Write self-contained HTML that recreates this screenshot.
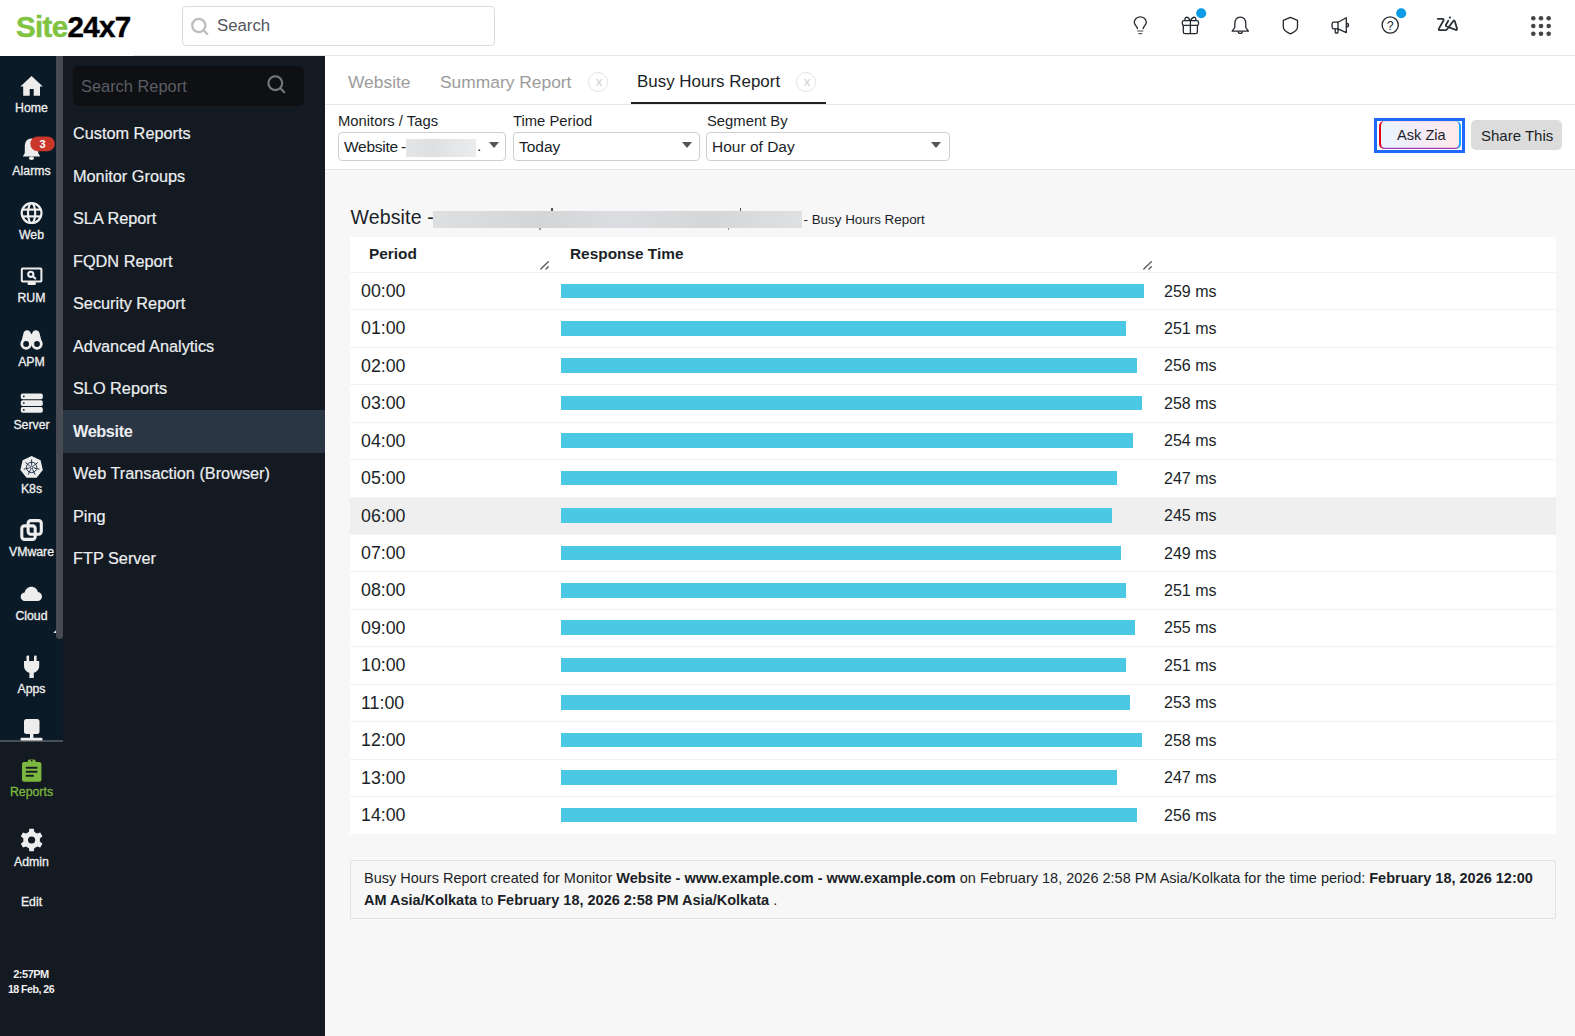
<!DOCTYPE html>
<html><head><meta charset="utf-8">
<style>
*{box-sizing:border-box;margin:0;padding:0}
html,body{width:1575px;height:1036px;overflow:hidden;background:#fff;font-family:"Liberation Sans",sans-serif;color:#1b1f27}
.abs{position:absolute}
#hdr{position:absolute;left:0;top:0;width:1575px;height:56px;background:#fff}
#hdrline{position:absolute;left:133px;top:55px;width:1442px;height:1px;background:#e6e6e6}
#logo{position:absolute;left:16px;top:10px;font-size:29.5px;font-weight:700;letter-spacing:-0.65px;-webkit-text-stroke:0.45px currentColor;white-space:nowrap}
#logo .g{color:#80c342}
#logo .k{color:#000}
#search{position:absolute;left:182px;top:6px;width:313px;height:40px;border:1px solid #dcdcdc;border-radius:4px;background:#fff}
#search span{position:absolute;left:34px;top:9px;font-size:16.8px;color:#52565c}
#rail{position:absolute;left:0;top:56px;width:63px;height:685px;background:#0a1a26}
#raildiv{position:absolute;left:0;top:740px;width:63px;height:2px;background:#4a4f57}
#thumb{position:absolute;left:56px;top:56px;width:7px;height:582.7px;background:#474a52;border-radius:0 0 3.5px 3.5px}
#panel{position:absolute;left:63px;top:56px;width:262px;height:980px;background:#131a22}
#pbot{position:absolute;left:0;top:742px;width:63px;height:294px;background:#131a22}
#srep{position:absolute;left:73px;top:66px;width:231px;height:40px;background:#0f1014;border-radius:5px}
#srep span{position:absolute;left:8px;top:11px;font-size:16.4px;color:#5b5e64}
.mi{position:absolute;left:63px;width:262px;height:43px;color:#eceef0;font-size:16.3px;padding-left:10px;line-height:43px;white-space:nowrap;-webkit-text-stroke:0.2px currentColor}
.mi.sel{background:#2b3645;font-weight:700;letter-spacing:-0.4px;-webkit-text-stroke:0}
.ri{position:absolute;left:0;width:63px;text-align:center;color:#f0f0f0;font-size:12.3px;font-weight:400;-webkit-text-stroke:0.3px currentColor;white-space:nowrap}
#main{position:absolute;left:325px;top:56px;width:1250px;height:980px;background:#f7f7f7}
#tabs{position:absolute;left:325px;top:56px;width:1250px;height:49px;background:#fff;border-bottom:1px solid #e6e6e6}
.tab{position:absolute;top:71.7px;font-size:17.4px;color:#9b9b9b;white-space:nowrap}
.cls{position:absolute;top:72px;width:20px;height:20px;border:1px solid #e3e3e3;border-radius:50%;color:#d2d2d2;font-size:13.5px;text-align:center;line-height:18px;padding-left:2px}
#filt{position:absolute;left:325px;top:105px;width:1250px;height:65px;background:#fff;border-bottom:1px solid #e6e6e6}
.lbl{position:absolute;top:112.7px;font-size:14.8px;color:#1b1f27;white-space:nowrap}
.sel{}
.selbox{position:absolute;top:131.5px;height:29.5px;border:1px solid #cfcfcf;border-radius:4px;background:#fff}
.selbox span{position:absolute;left:5px;top:5.5px;font-size:15.5px;white-space:nowrap;color:#1b1f27}
.tri{position:absolute;top:9.2px;width:0;height:0;border-left:5px solid transparent;border-right:5px solid transparent;border-top:6px solid #555}
#rtitle{position:absolute;left:350.5px;top:206px;font-size:19.5px;letter-spacing:0.15px;white-space:nowrap;color:#1b1f27}
#table{position:absolute;left:350px;top:237px;width:1206px;height:597px;background:#fff}
.th{position:absolute;top:244.8px;font-size:15.4px;font-weight:700;color:#1b1f27;white-space:nowrap}
.row{position:absolute;left:350px;width:1206px;height:37.43px;border-top:1px solid #f2f2f2}
.row .p{position:absolute;left:11px;top:8px;font-size:17.8px;color:#1b1f27}
.row .b{position:absolute;left:211px;top:10.6px;height:14.5px;background:#4bc9e4}
.row .v{position:absolute;left:814px;top:9.5px;font-size:16px;color:#1b1f27;white-space:nowrap}
#foot{position:absolute;left:350px;top:860px;width:1206px;height:59px;border:1px solid #e2e2e2;border-radius:2px;background:#f7f7f7}
</style></head><body>
<div id="hdr"></div>
<div id="hdrline"></div>
<div id="logo"><span class="g">Site</span><span class="k">24x7</span></div>
<div id="search"><span>Search</span></div>

<div id="rail"></div>
<div id="raildiv"></div>
<div id="thumb"></div>
<div id="panel"></div><div id="pbot"></div>
<div id="srep"><span>Search Report</span></div>

<div class="mi" style="top:112px">Custom Reports</div>
<div class="mi" style="top:154.5px">Monitor Groups</div>
<div class="mi" style="top:197px">SLA Report</div>
<div class="mi" style="top:239.5px">FQDN Report</div>
<div class="mi" style="top:282px">Security Report</div>
<div class="mi" style="top:324.5px">Advanced Analytics</div>
<div class="mi" style="top:367px">SLO Reports</div>
<div class="mi sel" style="top:410px">Website</div>
<div class="mi" style="top:452px">Web Transaction (Browser)</div>
<div class="mi" style="top:494.5px">Ping</div>
<div class="mi" style="top:537px">FTP Server</div>

<div id="main"></div>
<div id="tabs"></div>
<div class="tab" style="left:348px">Website</div>
<div class="tab" style="left:440px">Summary Report</div>
<div class="cls" style="left:588px">x</div>
<div class="tab" style="left:637px;color:#1b1f27;font-size:16.95px">Busy Hours Report</div>
<div class="cls" style="left:796px">x</div>
<div class="abs" style="left:631px;top:101.8px;width:195px;height:2.5px;background:#1f1f1f"></div>

<div id="filt"></div>
<div class="lbl" style="left:338px">Monitors / Tags</div>
<div class="lbl" style="left:513px">Time Period</div>
<div class="lbl" style="left:707px">Segment By</div>
<div class="selbox" style="left:338px;width:168px"><span style="letter-spacing:-0.25px;word-spacing:-1px">Website -</span><div class="tri" style="left:150px"></div></div>
<div class="selbox" style="left:513px;width:187px"><span>Today</span><div class="tri" style="left:168px"></div></div>
<div class="selbox" style="left:706px;width:244px"><span>Hour of Day</span><div class="tri" style="left:224px"></div></div>

<div id="rtitle">Website -</div>
<div id="table"></div>
<div class="th" style="left:369px">Period</div>
<div class="th" style="left:570px">Response Time</div>

<div class="row" style="top:272.00px"><span class="p">00:00</span><div class="b" style="width:582.8px"></div><span class="v">259 ms</span></div>
<div class="row" style="top:309.43px"><span class="p">01:00</span><div class="b" style="width:564.8px"></div><span class="v">251 ms</span></div>
<div class="row" style="top:346.86px"><span class="p">02:00</span><div class="b" style="width:576.0px"></div><span class="v">256 ms</span></div>
<div class="row" style="top:384.29px"><span class="p">03:00</span><div class="b" style="width:580.5px"></div><span class="v">258 ms</span></div>
<div class="row" style="top:421.72px"><span class="p">04:00</span><div class="b" style="width:571.5px"></div><span class="v">254 ms</span></div>
<div class="row" style="top:459.15px"><span class="p">05:00</span><div class="b" style="width:555.8px"></div><span class="v">247 ms</span></div>
<div class="row" style="top:496.58px;background:#efefef"><span class="p">06:00</span><div class="b" style="width:551.2px"></div><span class="v">245 ms</span></div>
<div class="row" style="top:534.01px"><span class="p">07:00</span><div class="b" style="width:560.2px"></div><span class="v">249 ms</span></div>
<div class="row" style="top:571.44px"><span class="p">08:00</span><div class="b" style="width:564.8px"></div><span class="v">251 ms</span></div>
<div class="row" style="top:608.87px"><span class="p">09:00</span><div class="b" style="width:573.8px"></div><span class="v">255 ms</span></div>
<div class="row" style="top:646.30px"><span class="p">10:00</span><div class="b" style="width:564.8px"></div><span class="v">251 ms</span></div>
<div class="row" style="top:683.73px"><span class="p">11:00</span><div class="b" style="width:569.2px"></div><span class="v">253 ms</span></div>
<div class="row" style="top:721.16px"><span class="p">12:00</span><div class="b" style="width:580.5px"></div><span class="v">258 ms</span></div>
<div class="row" style="top:758.59px"><span class="p">13:00</span><div class="b" style="width:555.8px"></div><span class="v">247 ms</span></div>
<div class="row" style="top:796.02px"><span class="p">14:00</span><div class="b" style="width:576.0px"></div><span class="v">256 ms</span></div>
<div id="foot"></div>
<div class="ri" style="top:101.4px">Home</div>
<div class="ri" style="top:163.8px">Alarms</div>
<div class="ri" style="top:228.0px">Web</div>
<div class="ri" style="top:290.9px">RUM</div>
<div class="ri" style="top:354.9px">APM</div>
<div class="ri" style="top:417.8px">Server</div>
<div class="ri" style="top:481.5px">K8s</div>
<div class="ri" style="top:545.0px">VMware</div>
<div class="ri" style="top:609.0px">Cloud</div>
<div class="ri" style="top:681.7px">Apps</div>
<div class="ri" style="top:784.7px;color:#7cb83f">Reports</div>
<div class="ri" style="top:855.2px">Admin</div>
<div class="ri" style="top:895.2px;font-weight:400">Edit</div>
<div class="ri" style="top:967.7px;font-size:11px;font-weight:700;letter-spacing:-0.5px;-webkit-text-stroke:0;padding-right:1px">2:57PM</div>
<div class="ri" style="top:983.2px;font-size:10.6px;font-weight:700;letter-spacing:-0.5px;-webkit-text-stroke:0;padding-right:1px">18 Feb, 26</div>
<div class="abs" style="left:406px;top:139px;width:70px;height:18px;background:linear-gradient(90deg,#e4e5e7,#dedfe1 40%,#e6e7e9 70%,#ebeced)"></div>
<div class="abs" style="left:477px;top:137px;font-size:15.5px;color:#1b1f27">.</div>
<div class="abs" style="left:433px;top:211px;width:369px;height:17px;background:linear-gradient(90deg,#dedfe1,#d4d5d7 30%,#dcdde0 50%,#d5d6d8 75%,#dfe0e2)"></div>
<div class="abs" style="left:551.3px;top:208px;width:1.3px;height:3px;background:#555"></div>
<div class="abs" style="left:739.6px;top:208px;width:1.3px;height:3px;background:#555"></div>
<div class="abs" style="left:539.3px;top:228px;width:1.4px;height:1.5px;background:#999"></div>
<div class="abs" style="left:727.6px;top:228px;width:1.4px;height:1.5px;background:#999"></div>
<div class="abs" style="left:803.5px;top:211.5px;font-size:13.4px;color:#1b1f27;white-space:nowrap">- Busy Hours Report</div>
<div class="abs" style="left:1374px;top:118px;width:91px;height:34.5px;border:3px solid #1f69ff"></div>
<div class="abs" style="left:1379px;top:121px;width:82px;height:28.3px;border-radius:5px;background:linear-gradient(90deg,#e8f6ff,#f3ebf7 50%,#ffe9ea);border-left:2px solid #e8001c;border-right:2px solid #10a6ff;box-shadow:inset 0 1px 0 #f1d9e6,inset 0 -1.2px 0 #9a3fa8"></div>
<div class="abs" style="left:1397px;top:126px;font-size:14.6px;color:#1b1f27;margin-top:0.8px">Ask Zia</div>
<div class="abs" style="left:1471px;top:120px;width:91px;height:30px;border-radius:5px;background:#dcdcdc"></div>
<div class="abs" style="left:1481px;top:127px;font-size:15px;color:#1b1f27;white-space:nowrap">Share This</div>
<div class="abs" style="left:364px;top:868px;font-size:14.5px;line-height:21.6px;color:#1b1f27;white-space:nowrap">Busy Hours Report created for Monitor <b>Website - www.example.com - www.example.com</b> on February 18, 2026 2:58 PM Asia/Kolkata for the time period: <b>February 18, 2026 12:00</b><br><b>AM Asia/Kolkata</b> to <b>February 18, 2026 2:58 PM Asia/Kolkata</b> .</div>
<svg id="ov" width="1575" height="1036" viewBox="0 0 1575 1036" style="position:absolute;left:0;top:0;pointer-events:none">
<!-- header search icon -->
<g fill="none" stroke="#bdbdbd" stroke-width="2.3">
<circle cx="198.8" cy="25.5" r="6.6"/><line x1="203.5" y1="30.2" x2="207.3" y2="34" stroke-linecap="round"/>
</g>
<!-- search report icon -->
<g fill="none" stroke="#75787d" stroke-width="2.1">
<circle cx="275.3" cy="83.2" r="6.9"/><line x1="280.3" y1="88.2" x2="284.3" y2="92.2" stroke-linecap="round"/>
</g>
<!-- header icons -->
<g fill="none" stroke="#23272e" stroke-width="1.3" stroke-linecap="round" stroke-linejoin="round">
 <!-- bulb -->
 <path d="M1137.5,28.6 C1137.3,26.6 1134.3,24.8 1134.3,22.4 C1134.3,19.2 1137,16.9 1140.3,16.9 C1143.6,16.9 1146.3,19.2 1146.3,22.4 C1146.3,24.8 1143.3,26.6 1143.1,28.6"/>
 <rect x="1137.3" y="30.2" width="6" height="1.6" fill="#8a8a8a" stroke="none"/>
 <rect x="1138.4" y="33" width="3.8" height="1.2" fill="#555" stroke="none"/>
 <!-- gift -->
 <rect x="1182.3" y="20.6" width="16.2" height="4.8" rx="1.6"/>
 <path d="M1183.3,25.4 L1183.3,32 C1183.3,33 1184,33.6 1185,33.6 L1195.8,33.6 C1196.8,33.6 1197.4,33 1197.4,32 L1197.4,25.4"/>
 <line x1="1190.4" y1="20.6" x2="1190.4" y2="33.6"/>
 <path d="M1190.2,20.5 C1189,18.2 1187.6,17.1 1186.3,17.3 C1184.9,17.6 1184.7,19.2 1185.2,20.5"/>
 <path d="M1190.6,20.5 C1191.8,18.2 1193.2,17.1 1194.5,17.3 C1195.9,17.6 1196.1,19.2 1195.6,20.5"/>
 <!-- bell -->
 <path d="M1240.3,17.2 C1236.2,17.2 1234.8,20.5 1234.8,24.2 L1234.8,27.5 L1232.2,31.2 L1248.4,31.2 L1245.8,27.5 L1245.8,24.2 C1245.8,20.5 1244.4,17.2 1240.3,17.2 Z"/>
 <path d="M1238.3,31.8 C1238.3,34 1242.3,34 1242.3,31.8"/>
 <!-- shield -->
 <path d="M1290.4,17.3 L1297.5,20.3 L1297.5,27 C1297.5,30 1294,32.3 1290.4,33.8 C1286.8,32.3 1283.3,30 1283.3,27 L1283.3,20.3 Z"/>
 <!-- megaphone -->
 <path d="M1346.3,17.8 L1346.3,32.6 L1338,28.8 L1333.8,28.8 C1332.7,28.8 1332.1,28 1332.1,27 L1332.1,24 C1332.1,23 1332.7,22.2 1333.8,22.2 L1338,22.2 Z"/>
 <line x1="1338" y1="22.2" x2="1338" y2="28.8"/>
 <path d="M1335.2,28.8 L1335.2,32.3 C1335.2,32.8 1335.5,33 1336,33 L1337.3,33 C1337.8,33 1338,32.8 1338,32.3 L1338,28.8"/>
 <path d="M1347.4,23.6 C1348.7,24 1348.7,26.4 1347.4,26.8" stroke-width="1.6"/>
 <!-- help -->
 <circle cx="1390.2" cy="25" r="8.1"/>
</g>
<text x="1390.2" y="29.8" font-family="Liberation Sans" font-size="12.5" text-anchor="middle" fill="#23272e">?</text>
<circle cx="1201.2" cy="13.3" r="5" fill="#0c9be4"/>
<circle cx="1401.2" cy="13.3" r="5" fill="#0c9be4"/>
<!-- zia -->
<g fill="none" stroke="#2b2f36" stroke-width="1.8" stroke-linejoin="round" stroke-linecap="round">
 <path d="M1437.8,18.8 L1442.6,18.8 C1443.6,18.8 1444,19.6 1443.5,20.5 L1438.9,28.6 C1438.4,29.5 1438.8,30.1 1439.8,30.1 L1445.6,30.1 C1446.4,30.1 1447,29.6 1447.6,28.6 L1453.3,21 C1453.9,20.2 1454.5,20.4 1454.8,21.3 L1457,28.6 C1457.3,29.6 1456.7,30.2 1455.8,29.9 L1446.7,26.5 C1445.8,26.1 1445.6,25.5 1446,24.7 L1448.3,20.8"/>
</g>
<circle cx="1450" cy="17.6" r="1.05" fill="#2b2f36"/>
<!-- grid -->
<g fill="#454545">
 <circle cx="1533.3" cy="18.2" r="2.3"/><circle cx="1541" cy="18.2" r="2.3"/><circle cx="1548.7" cy="18.2" r="2.3"/>
 <circle cx="1533.3" cy="26" r="2.3"/><circle cx="1541" cy="26" r="2.3"/><circle cx="1548.7" cy="26" r="2.3"/>
 <circle cx="1533.3" cy="33.8" r="2.3"/><circle cx="1541" cy="33.8" r="2.3"/><circle cx="1548.7" cy="33.8" r="2.3"/>
</g>

<!-- rail icons -->
<g fill="#ededed">
 <!-- home -->
 <path d="M31.6,76 L20.4,86.4 L23.2,86.4 L23.2,95.8 L29.7,95.8 L29.7,89.1 L33.7,89.1 L33.7,95.8 L40,95.8 L40,86.4 L42.8,86.4 Z"/>
 <!-- bell -->
 <path d="M31.5,138.5 C26.5,138.5 24.8,142.5 24.8,147 L24.8,153 L22.8,156.5 L40.2,156.5 L38.2,153 L38.2,147 C38.2,142.5 36.5,138.5 31.5,138.5 Z"/>
 <ellipse cx="31.5" cy="158.3" rx="2.6" ry="1.8"/>
</g>
<rect x="30.3" y="136.4" width="24.5" height="14.8" rx="7.4" fill="#c9382b"/>
<text x="42.6" y="148" font-family="Liberation Sans" font-size="11" font-weight="700" text-anchor="middle" fill="#fff">3</text>
<!-- globe -->
<g fill="none" stroke="#ededed" stroke-width="2.2">
 <circle cx="31.6" cy="213.1" r="9.9"/>
 <ellipse cx="31.6" cy="213.1" rx="3.6" ry="9.9"/>
 <line x1="22" y1="209.6" x2="41.2" y2="209.6"/>
 <line x1="22" y1="216.4" x2="41.2" y2="216.4"/>
</g>
<!-- RUM -->
<rect x="21.8" y="268.6" width="19.6" height="13" rx="0.8" fill="none" stroke="#ededed" stroke-width="2"/>
<rect x="27.5" y="282" width="8.5" height="3" rx="1.5" fill="#ededed"/>
<circle cx="30.8" cy="274.3" r="2.6" fill="none" stroke="#ededed" stroke-width="2.1"/>
<line x1="32.8" y1="276.3" x2="35.3" y2="278.6" stroke="#ededed" stroke-width="2.1" stroke-linecap="round"/>
<!-- APM binoculars -->
<g fill="#ededed">
 <path d="M20.8,344 L23.6,332.8 C24.2,331 25.3,330.2 27.1,330.2 C28.9,330.2 30.1,331.2 30.7,332.9 L31.5,334.3 L32.3,332.9 C32.9,331.2 34.1,330.2 35.9,330.2 C37.7,330.2 38.8,331 39.4,332.8 L42.3,344 Z"/>
 <circle cx="26.1" cy="344" r="5.7"/>
 <circle cx="37" cy="344" r="5.7"/>
</g>
<circle cx="26.1" cy="344" r="2.9" fill="#0a1a26"/>
<circle cx="37" cy="344" r="2.9" fill="#0a1a26"/>
<!-- server -->
<g fill="#ededed">
 <rect x="20.8" y="393.4" width="22" height="5.8" rx="1.8"/>
 <rect x="20.8" y="400.2" width="22" height="5.8" rx="1.8"/>
 <rect x="20.8" y="407" width="22" height="5.8" rx="1.8"/>
</g>
<g fill="#0a1a26"><circle cx="23.8" cy="396.3" r="0.9"/><circle cx="23.8" cy="403.1" r="0.9"/><circle cx="23.8" cy="409.9" r="0.9"/></g>
<!-- K8s heptagon -->
<polygon points="31.6,455.9 40.6,460.2 42.8,469.9 36.6,477.7 26.6,477.7 20.4,469.9 22.6,460.2" fill="#ededed"/>
<g fill="none" stroke="#26344a" stroke-width="1">
 <circle cx="31.6" cy="467.4" r="5.2"/>
 <circle cx="31.6" cy="467.4" r="1.3"/>
 <line x1="31.60" y1="465.20" x2="31.60" y2="459.40"/>
 <line x1="33.32" y1="466.03" x2="37.85" y2="462.41"/>
 <line x1="33.74" y1="467.89" x2="39.40" y2="469.18"/>
 <line x1="32.55" y1="469.38" x2="35.07" y2="474.61"/>
 <line x1="30.65" y1="469.38" x2="28.13" y2="474.61"/>
 <line x1="29.46" y1="467.89" x2="23.80" y2="469.18"/>
 <line x1="29.88" y1="466.03" x2="25.35" y2="462.41"/>
</g>
<!-- VMware -->
<g fill="none" stroke="#ededed" stroke-width="3.1">
 <rect x="28.1" y="520.6" width="13.2" height="13.6" rx="2.6"/>
 <rect x="21.8" y="525.9" width="13.4" height="13.5" rx="2.6"/>
</g>
<!-- cloud -->
<path d="M25,601 C22.5,601 20.7,599.2 20.7,596.8 C20.7,594.5 22.4,592.8 24.6,592.6 C25.2,589.1 28,586.7 31.4,586.7 C34.6,586.7 37.2,588.8 37.9,591.9 C40.3,592.1 42,594.1 42,596.5 C42,599 40,601 37.5,601 Z" fill="#ededed"/>
<!-- apps plug -->
<g fill="#ededed">
 <rect x="26.5" y="655.5" width="2.6" height="6.5" rx="1"/>
 <rect x="34" y="655.5" width="2.6" height="6.5" rx="1"/>
 <path d="M24,661 L39.2,661 L39.2,666 C39.2,669.5 36.5,672.2 33.8,672.8 L33.8,678 L29.4,678 L29.4,672.8 C26.7,672.2 24,669.5 24,666 Z"/>
</g>
<!-- monitor partial -->
<g fill="#ededed">
 <rect x="24" y="719" width="15.5" height="15" rx="2.5"/>
 <rect x="30" y="734" width="3.4" height="4"/>
 <rect x="20.5" y="737.8" width="22" height="2.6" rx="1"/>
</g>
<!-- reports clipboard -->
<g fill="#7cb83f">
 <rect x="22" y="762" width="19.4" height="19.8" rx="2"/>
 <rect x="27.8" y="759.5" width="7.8" height="4.2" rx="1.5"/>
</g>
<g fill="#131a22">
 <rect x="25.8" y="766.8" width="11.6" height="1.9"/>
 <rect x="25.8" y="770.8" width="11.6" height="1.9"/>
 <rect x="25.8" y="774.8" width="8" height="1.9"/>
</g>
<circle cx="31.7" cy="760.6" r="0.9" fill="#131a22"/>
<!-- gear -->
<g transform="translate(31.6,840)">
 <path fill="#ededed" d="M-2.2,-11.3 L2.2,-11.3 L2.8,-8 C3.8,-7.6 4.7,-7.1 5.5,-6.4 L8.6,-7.6 L10.8,-3.8 L8.2,-1.6 C8.35,-0.55 8.35,0.55 8.2,1.6 L10.8,3.8 L8.6,7.6 L5.5,6.4 C4.7,7.1 3.8,7.6 2.8,8 L2.2,11.3 L-2.2,11.3 L-2.8,8 C-3.8,7.6 -4.7,7.1 -5.5,6.4 L-8.6,7.6 L-10.8,3.8 L-8.2,1.6 C-8.35,0.55 -8.35,-0.55 -8.2,-1.6 L-10.8,-3.8 L-8.6,-7.6 L-5.5,-6.4 C-4.7,-7.1 -3.8,-7.6 -2.8,-8 Z"/>
 <circle r="3.6" fill="#131a22"/>
</g>
<polygon points="53.3,633 56,630.2 56,633" fill="#f4f4f4"/>
<!-- resize handles -->
<g stroke="#555" stroke-width="1.3" stroke-linecap="round">
 <line x1="540.8" y1="269" x2="548.3" y2="261.8"/><line x1="546" y1="269" x2="548.3" y2="266.7"/>
 <line x1="1143.8" y1="269" x2="1151.3" y2="261.8"/><line x1="1149" y1="269" x2="1151.3" y2="266.7"/>
</g>
</svg>

</body></html>
